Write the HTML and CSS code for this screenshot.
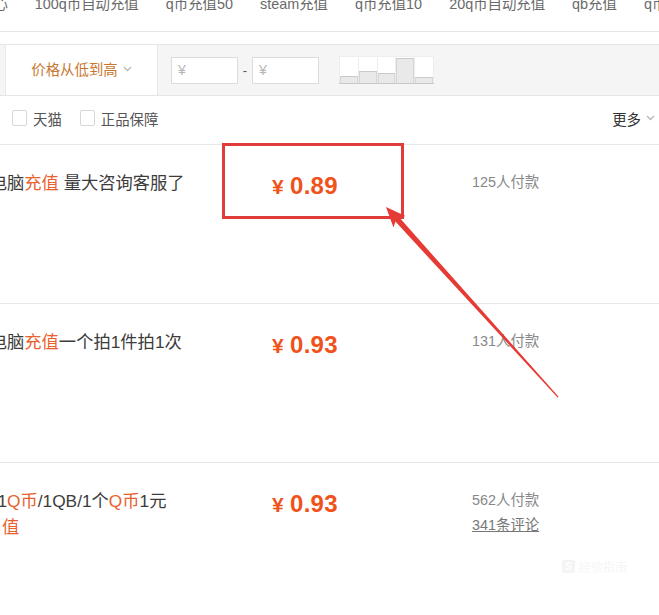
FILE: index.html
```html
<!DOCTYPE html>
<html lang="zh-CN">
<head>
<meta charset="utf-8">
<title>搜索结果</title>
<link rel="stylesheet" href="styles.css">
</head>
<body>
<div class="page">
  <div class="topnav">
    <span class="nav-item nav-first">中心</span>
    <span class="nav-item">100q币自动充值</span>
    <span class="nav-item">q币充值50</span>
    <span class="nav-item">steam充值</span>
    <span class="nav-item">q币充值10</span>
    <span class="nav-item">20q币自动充值</span>
    <span class="nav-item">qb充值</span>
    <span class="nav-item">q币充值</span>
  </div>

  <div class="sortbar">
    <div class="sort-tab">价格从低到高<svg class="chev" width="9" height="6" viewBox="0 0 9 6"><path d="M1 1 L4.5 4.5 L8 1" fill="none" stroke="#b9b9b9" stroke-width="1.4"/></svg></div>
    <div class="price-range">
      <div class="pinput">¥</div>
      <span class="dash">-</span>
      <div class="pinput">¥</div>
    </div>
    <div class="histo">
      <div class="hcol"><div class="hbar" style="height:7px"></div></div>
      <div class="hcol"><div class="hbar" style="height:12px"></div></div>
      <div class="hcol"><div class="hbar" style="height:10px"></div></div>
      <div class="hcol"><div class="hbar" style="height:25px"></div></div>
      <div class="hcol"><div class="hbar" style="height:6px"></div></div>
    </div>
  </div>

  <div class="filters">
    <label class="chk"><span class="box"></span>天猫</label>
    <label class="chk"><span class="box"></span>正品保障</label>
    <div class="more">更多<svg class="chev" width="9" height="6" viewBox="0 0 9 6"><path d="M1 1 L4.5 4.5 L8 1" fill="none" stroke="#b9b9b9" stroke-width="1.4"/></svg></div>
  </div>

  <div class="item">
    <div class="title"><span class="tline ind-a">电脑<em>充值</em> 量大咨询客服了</span></div>
    <div class="price"><span class="yen">¥</span>0.89</div>
    <div class="deal"><span class="dline">125人付款</span></div>
    <div class="mark-box"></div>
  </div>

  <div class="item">
    <div class="title"><span class="tline ind-a">电脑<em>充值</em>一个拍1件拍1次</span></div>
    <div class="price"><span class="yen">¥</span>0.93</div>
    <div class="deal"><span class="dline">131人付款</span></div>
  </div>

  <div class="item item-last">
    <div class="title"><span class="tline ind-b">1<em>Q币</em>/1QB/1个<em>Q币</em>1元</span><span class="tline"><em>值</em></span></div>
    <div class="price"><span class="yen">¥</span>0.93</div>
    <div class="deal"><span class="dline">562人付款</span><a class="dline review">341条评论</a></div>
  </div>

  <div class="watermark"><span class="wm-s">S</span>经验指南</div>

  <svg class="arrow" width="659" height="615" viewBox="0 0 659 615">
    <polygon points="386,207 405.5,216 399.6,217.8 558.6,396.8 557.6,397.4 395.4,221.6 393.5,227.5" fill="#e63a35"/>
  </svg>
</div>
</body>
</html>
```

FILE: styles.css
```css
* { box-sizing: border-box; }
html, body { margin: 0; padding: 0; background: #fff; }
body {
  font-family: "Liberation Sans", "Noto Sans CJK SC", sans-serif;
  font-size: 14.4px;
  color: #3c3c3c;
  overflow: hidden;
}
.page {
  position: relative;
  width: 659px;
  height: 615px;
  overflow: hidden;
}

/* top keyword nav */
.topnav {
  height: 32px;
  border-bottom: 1px solid #e6e6e6;
  display: flex;
  gap: 27px;
  margin-left: -21px;
  white-space: nowrap;
  color: #6a6a6a;
  line-height: 18px;
  overflow: hidden;
}
.nav-item { margin-top: -5px; flex: none; }

/* sort bar */
.sortbar {
  margin-top: 12px;
  height: 52px;
  border-top: 1px solid #e6e6e6;
  border-bottom: 1px solid #e6e6e6;
  background: #f5f5f5;
  display: flex;
  align-items: center;
  padding-left: 5px;
}
.sort-tab {
  align-self: stretch;
  width: 153px;
  background: #fff;
  border-left: 1px solid #e8e8e8;
  border-right: 1px solid #e8e8e8;
  display: flex;
  align-items: center;
  justify-content: center;
  color: #c8772f;
  gap: 5px;
  padding-bottom: 3px;
}
.chev { display: block; flex: none; }
.price-range {
  display: flex;
  align-items: center;
  margin-left: 13px;
}
.pinput {
  width: 67px;
  height: 27px;
  background: #fff;
  border: 1px solid #dcdcdc;
  color: #b5b5b5;
  line-height: 24px;
  padding-left: 6px;
  font-size: 14px;
}
.dash {
  width: 14px;
  text-align: center;
  color: #555;
  font-size: 13px;
}
.histo {
  margin-left: 20px;
  width: 95px;
  height: 28px;
  display: flex;
  background: #fff;
  border-top: 1px solid #eeeeee;
  border-bottom: 1px solid #c8c8c8;
}
.hcol {
  flex: 1;
  display: flex;
  align-items: flex-end;
  border-left: 1px solid #ececec;
}
.hcol:last-child { border-right: 1px solid #ececec; }
.hbar {
  width: 100%;
  background: #e9e9e9;
  border-top: 1px solid #c9c9c9;
  border-left: 1px solid #d6d6d6;
  border-right: 1px solid #d6d6d6;
}

/* filters */
.filters {
  height: 49px;
  border-bottom: 1px solid #e8e8e8;
  display: flex;
  align-items: center;
  padding-left: 12px;
  padding-right: 4px;
  padding-bottom: 4px;
  color: #555;
}
.chk {
  display: flex;
  align-items: center;
  margin-right: 18px;
}
.box {
  width: 15px;
  height: 16px;
  border: 1px solid #d8d8d8;
  border-radius: 2px;
  background: #fff;
  margin-right: 6px;
}
.more {
  margin-left: auto;
  display: flex;
  align-items: center;
  gap: 5px;
  color: #333;
}

/* items */
.item {
  position: relative;
  height: 159px;
  border-bottom: 1px solid #e8e8e8;
  display: flex;
  padding-top: 25px;
}
.item-last { border-bottom: none; }
.title {
  width: 272px;
  padding-left: 2px;
  font-size: 17.3px;
  line-height: 26px;
  white-space: nowrap;
}
.tline { display: block; }
.ind-a { margin-left: -12.3px; }
.ind-b { margin-left: -4.6px; }
.title em { font-style: normal; color: #e8612e; }
.price {
  width: 200px;
  margin-top: 3px;
  line-height: 26px;
  font-size: 24px;
  font-weight: bold;
  color: #f0521a;
  white-space: nowrap;
  letter-spacing: 0.3px;
}
.yen {
  font-size: 21px;
  margin-right: 6px;
}
.deal {
  display: flex;
  flex-direction: column;
  color: #888;
  line-height: 25px;
}
.dline { display: block; }
.review { color: #777; text-decoration: underline; }

.mark-box {
  position: absolute;
  left: 222px;
  top: -2px;
  width: 182px;
  height: 76px;
  border: 3px solid #e03c3a;
}

.watermark {
  position: absolute;
  left: 562px;
  top: 558px;
  color: #f6f6f6;
  font-size: 12px;
  display: flex;
  align-items: center;
  gap: 4px;
}
.wm-s {
  display: inline-block;
  width: 13px;
  height: 13px;
  border-radius: 2px;
  background: #f4f4f4;
  color: #fff;
  font-size: 11px;
  font-weight: bold;
  text-align: center;
  line-height: 13px;
}

.arrow {
  position: absolute;
  left: 0;
  top: 0;
  pointer-events: none;
}
```
